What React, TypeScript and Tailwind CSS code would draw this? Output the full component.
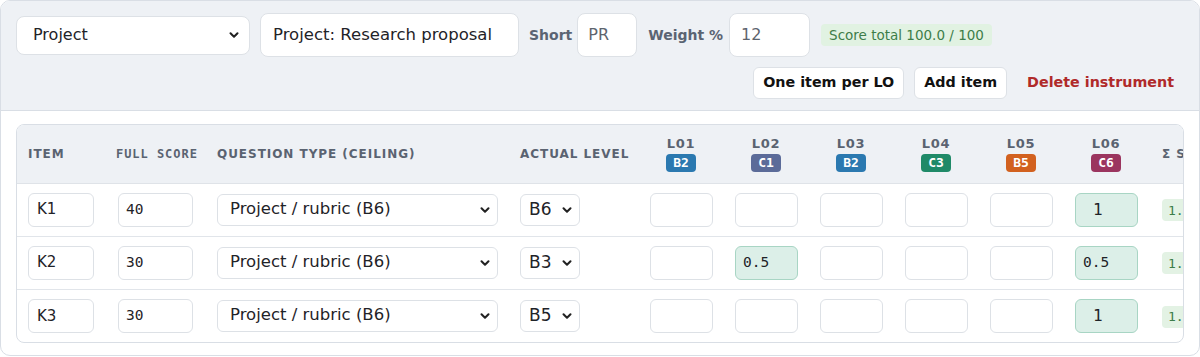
import { ChevronDown } from "lucide-react";

type Row = {
  item: string;
  full: string;
  level: string;
  lo: string[];
  sum: string;
};

const los = [
  { name: "L01", level: "B2", color: "bg-[#2b79b0]" },
  { name: "L02", level: "C1", color: "bg-[#5b6b99]" },
  { name: "L03", level: "B2", color: "bg-[#2b79b0]" },
  { name: "L04", level: "C3", color: "bg-[#1f8a68]" },
  { name: "L05", level: "B5", color: "bg-[#d2611f]" },
  { name: "L06", level: "C6", color: "bg-[#9b355f]" },
];

const rows: Row[] = [
  { item: "K1", full: "40", level: "B6", lo: ["", "", "", "", "", "1"], sum: "1.0" },
  { item: "K2", full: "30", level: "B3", lo: ["", "0.5", "", "", "", "0.5"], sum: "1.0" },
  { item: "K3", full: "30", level: "B5", lo: ["", "", "", "", "", "1"], sum: "1.0" },
];

const th = "text-left align-middle font-bold uppercase text-[12px] tracking-[0.08em] text-[#5a6371]";

function FakeSelect({ value, className }: { value: string; className: string }) {
  return (
    <div className={`flex items-center justify-between bg-white border border-[#dde1e6] ${className}`}>
      <span className="truncate">{value}</span>
      <ChevronDown size={14} strokeWidth={3.5} className="shrink-0 text-[#222]" />
    </div>
  );
}

export default function App() {
  return (
    <div className="w-[1200px] h-[357px] bg-white font-['DejaVu_Sans',sans-serif] text-[#1f2328]">
      <div className="border border-[#d9dee5] rounded-[10px] overflow-hidden">
        <div className="bg-[#eef1f5] border-b border-[#d9dee5] px-[15px] pt-[12px] pb-[11px]">
          <div className="flex items-center">
            <FakeSelect value="Project" className="w-[234px] h-[39px] rounded-[8px] pl-4 pr-[8px] text-[16px]" />
            <div className="ml-[10px] w-[259px] h-[44px] rounded-[8px] border border-[#dde1e6] bg-white px-3 flex items-center text-[16.5px]">
              Project: Research proposal
            </div>
            <span className="ml-[10px] text-[14px] font-bold text-[#5b6473]">Short</span>
            <div className="ml-[5px] w-[60px] h-[44px] rounded-[8px] border border-[#dde1e6] bg-white px-[10px] flex items-center text-[16px] text-[#5d646d]">
              PR
            </div>
            <span className="ml-[11px] text-[14px] font-bold text-[#5b6473]">Weight %</span>
            <div className="ml-[6px] w-[81px] h-[44px] rounded-[8px] border border-[#dde1e6] bg-white px-[11px] flex items-center text-[16px] text-[#5d646d]">
              12
            </div>
            <span className="ml-[11px] h-[22px] px-[8px] rounded-[4px] bg-[#e1f2e2] text-[#3d7d49] text-[13.5px] flex items-center">
              Score total 100.0 / 100
            </span>
          </div>
          <div className="flex justify-end items-center mt-[10px] gap-[10px]">
            <button className="h-[32px] px-[9px] rounded-[6px] border border-[#dde1e6] bg-white text-[14.3px] font-bold text-[#111]">
              One item per LO
            </button>
            <button className="h-[32px] px-[9px] rounded-[6px] border border-[#dde1e6] bg-white text-[14.3px] font-bold text-[#111]">
              Add item
            </button>
            <button className="h-[32px] px-[10px] text-[14.3px] font-bold text-[#b02a2a]">
              Delete instrument
            </button>
          </div>
        </div>

        <div className="px-[15px] pt-[13px] pb-[12px]">
          <div className="border border-[#d9dee5] rounded-[8px] overflow-hidden">
            <table className="table-fixed border-collapse w-[1300px]">
              <colgroup>
                <col className="w-[89px]" />
                <col className="w-[99px]" />
                <col className="w-[305px]" />
                <col className="w-[130px]" />
                {los.map((l) => (
                  <col key={l.name} className="w-[85px]" />
                ))}
                <col className="w-[150px]" />
                <col />
              </colgroup>
              <thead>
                <tr className="bg-[#eef1f5] h-[58px] border-b border-[#dfe3e8]">
                  <th className={`${th} pl-[11px]`}>Item</th>
                  <th className={`${th} pl-[10px] text-[11px] tracking-[0.08em] font-['DejaVu_Sans_Mono',monospace]`}>Full&nbsp;score</th>
                  <th className={`${th} pl-[12px]`}>Question type (ceiling)</th>
                  <th className={`${th} pl-[10px]`}>Actual level</th>
                  {los.map((l) => (
                    <th key={l.name} className="align-middle">
                      <div className="flex flex-col items-center pr-[3px]">
                        <span className="text-[13px] font-bold tracking-[0.06em] text-[#5a6371] leading-[16px]">{l.name}</span>
                        <span className={`mt-[2px] w-[30px] h-[18px] rounded-[4px] ${l.color} text-white text-[13px] font-bold font-['DejaVu_Sans_Mono',monospace] flex items-center justify-center`}>
                          {l.level}
                        </span>
                      </div>
                    </th>
                  ))}
                  <th className={`${th} pl-[12px]`}>Σ Score</th>
                  <th></th>
                </tr>
              </thead>
              <tbody>
                {rows.map((r, i) => (
                  <tr key={r.item} className={`h-[53px] ${i < rows.length - 1 ? "border-b border-[#e1e5ea]" : ""}`}>
                    <td className="pl-[11px]">
                      <div className="w-[66px] h-[34px] rounded-[6px] border border-[#dde1e6] px-[8px] flex items-center text-[15px]">{r.item}</div>
                    </td>
                    <td className="pl-[12px]">
                      <div className="w-[75px] h-[34px] rounded-[6px] border border-[#dde1e6] px-[7px] flex items-center text-[14.5px] font-['DejaVu_Sans_Mono',monospace]">{r.full}</div>
                    </td>
                    <td className="pl-[12px]">
                      <FakeSelect value="Project / rubric (B6)" className="w-[281px] h-[32px] rounded-[6px] pl-[12px] pr-[5px] text-[16.5px]" />
                    </td>
                    <td className="pl-[10px]">
                      <FakeSelect value={r.level} className="w-[60px] h-[32px] rounded-[6px] pl-[8px] pr-[5px] text-[17px]" />
                    </td>
                    {r.lo.map((v, j) => (
                      <td key={j} className="pl-[10px]">
                        <div
                          className={`w-[63px] h-[34px] rounded-[6px] border flex items-center font-['DejaVu_Sans_Mono',monospace] ${
                            v ? "bg-[#dcefe8] border-[#a8d5c4]" : "bg-white border-[#dde1e6]"
                          } ${v.length === 1 ? "pl-[17px] text-[16px]" : "pl-[7px] text-[14.5px]"}`}
                        >
                          {v}
                        </div>
                      </td>
                    ))}
                    <td className="pl-[12px]">
                      <span className="inline-flex h-[22px] px-[6px] items-center rounded-[4px] bg-[#e3f2e4] text-[#3d7d49] text-[13px] font-['DejaVu_Sans_Mono',monospace]">
                        {r.sum}
                      </span>
                    </td>
                    <td></td>
                  </tr>
                ))}
              </tbody>
            </table>
          </div>
        </div>
      </div>
    </div>
  );
}
